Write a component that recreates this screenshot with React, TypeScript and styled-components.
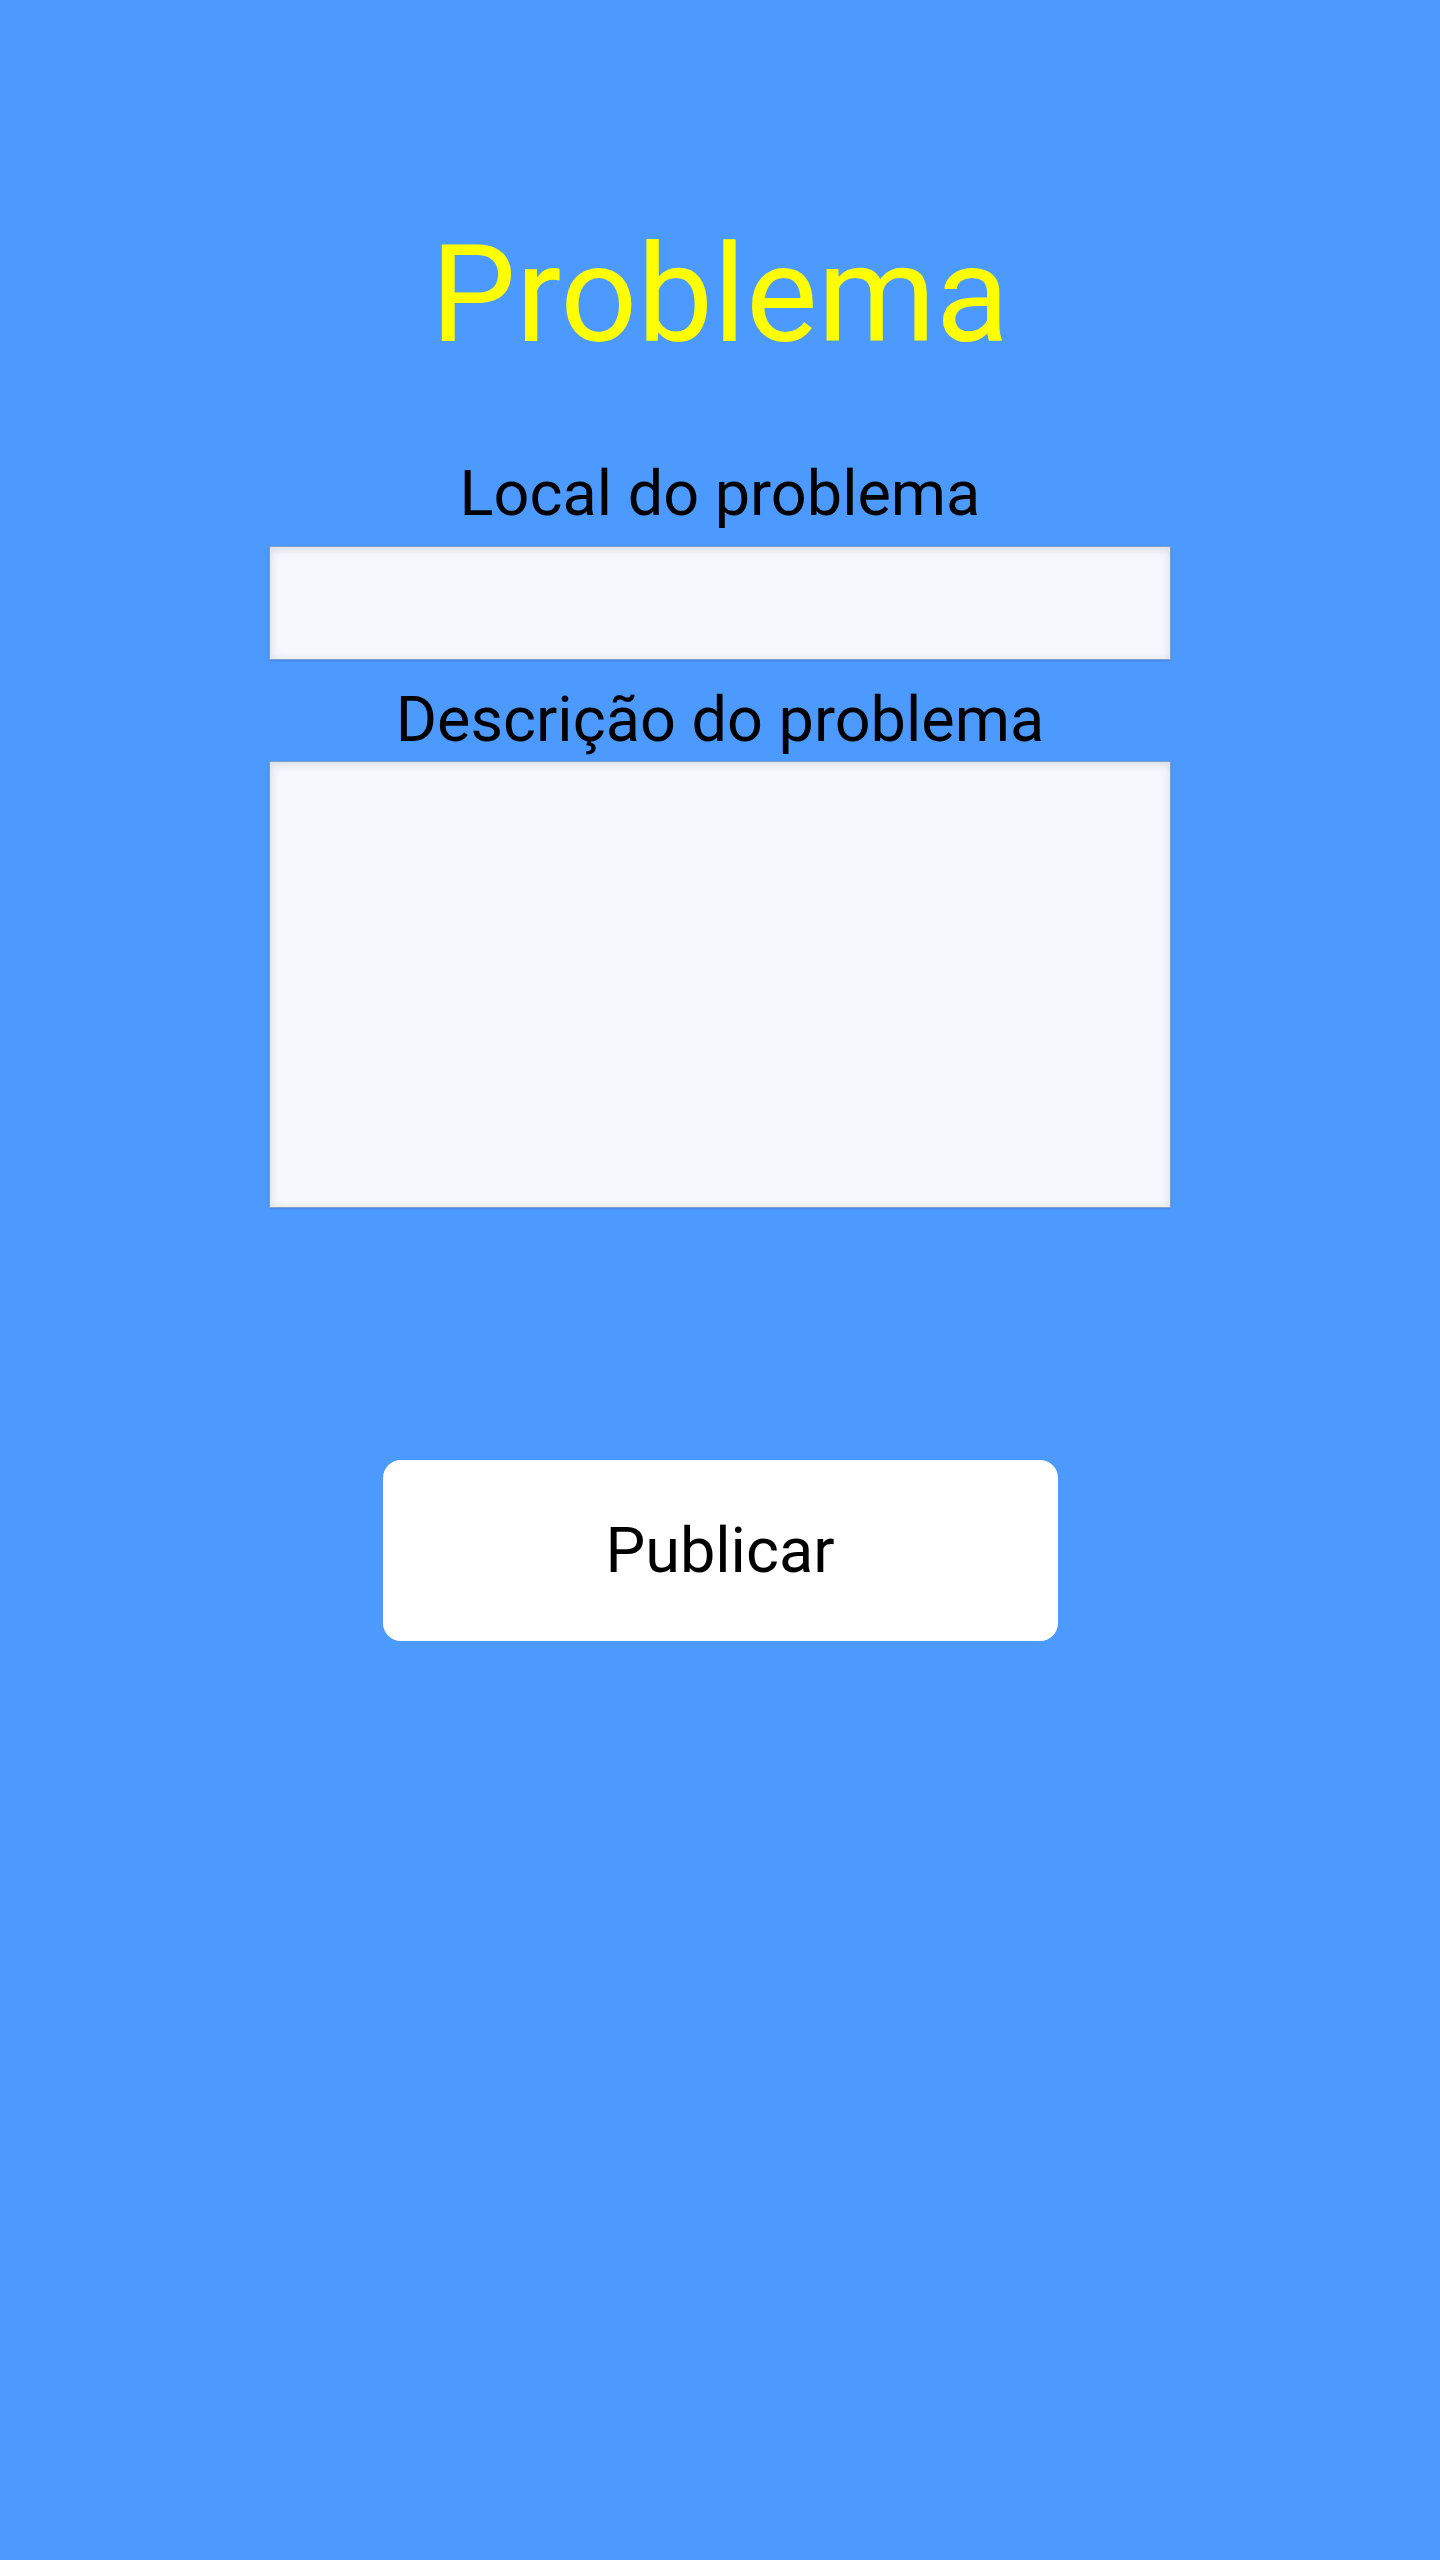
import React from "react";
import styled, { createGlobalStyle } from "styled-components";

const GlobalStyle = createGlobalStyle`
  html, body {
    margin: 0;
    padding: 0;
    background: #4d9aff;
  }
  body {
    font-family: Roboto, "Noto Sans", "Liberation Sans", sans-serif;
  }
`;

const Screen = styled.main`
  min-height: 2560px;
  background: #4d9aff;
  display: flex;
  flex-direction: column;
  align-items: center;
  box-sizing: border-box;
  padding-top: 216px;
`;

const Title = styled.h1`
  margin: 0;
  font-family: Roboto, sans-serif;
  font-weight: 400;
  font-size: 135px;
  line-height: 1.172;
  color: #ffff00;
  text-align: center;
`;

const Form = styled.form`
  display: flex;
  flex-direction: column;
  align-items: center;
  width: 902px;
  margin-top: 83px;
`;

const Label = styled.label<{ $gap: number; $top?: number }>`
  display: block;
  font-family: Roboto, sans-serif;
  font-size: 63px;
  line-height: 1.172;
  color: #000;
  text-align: center;
  margin-top: ${(p) => p.$top ?? 0}px;
  margin-bottom: ${(p) => p.$gap}px;
`;

const fieldStyles = `
  box-sizing: border-box;
  width: 902px;
  border: 1px solid #7f9fcc;
  background: #f5f8fd;
  box-shadow: inset 0 4px 8px rgba(60, 70, 90, 0.09), inset 4px 0 8px rgba(60, 70, 90, 0.05),
    inset -4px 0 8px rgba(60, 70, 90, 0.04), 0 1px 2px rgba(40, 60, 110, 0.25);
  outline: none;
  font-family: Roboto, sans-serif;
  font-size: 48px;
  padding: 8px 16px;
  margin: 0;
`;

const TextInput = styled.input`
  ${fieldStyles}
  height: 114px;
`;

const TextArea = styled.textarea`
  ${fieldStyles}
  height: 447px;
  resize: none;
  display: block;
`;

const PublishButton = styled.button`
  margin-top: 252px;
  width: 675px;
  height: 181px;
  border: none;
  border-radius: 18px;
  background: #ffffff;
  color: #000;
  font-family: Roboto, sans-serif;
  font-size: 63px;
  line-height: 1;
  cursor: pointer;
  display: flex;
  align-items: center;
  justify-content: center;
  padding: 0;
`;

export default function App() {
  return (
    <>
      <GlobalStyle />
      <Screen>
        <Title>Problema</Title>
        <Form onSubmit={(e) => e.preventDefault()}>
          <Label htmlFor="local" $gap={15}>
            Local do problema
          </Label>
          <TextInput id="local" type="text" />
          <Label htmlFor="descricao" $top={23} $gap={4}>
            Descrição do problema
          </Label>
          <TextArea id="descricao" />
        </Form>
        <PublishButton type="button">Publicar</PublishButton>
      </Screen>
    </>
  );
}
